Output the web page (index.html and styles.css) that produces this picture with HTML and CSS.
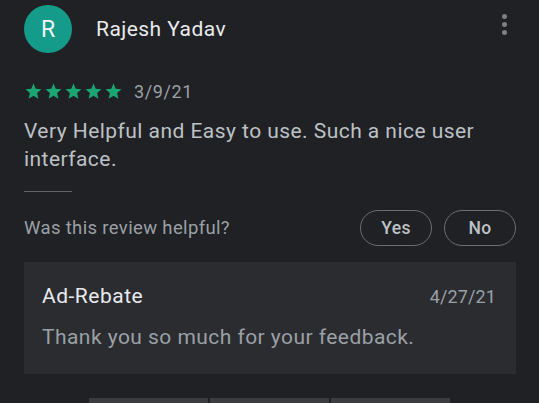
FILE: index.html
```html
<!DOCTYPE html>
<html>
<head>
<meta charset="utf-8">
<link rel="stylesheet" href="styles.css">
</head>
<body>
<div class="review">
  <div class="header">
    <div class="avatar">R</div>
    <div class="name">Rajesh Yadav</div>
    <div class="menu"><span></span><span></span><span></span></div>
  </div>
  <div class="meta">
    <div class="stars">
      <svg viewBox="0 0 24 24"><path d="M12 17.27L18.18 21l-1.64-7.03L22 9.24l-7.19-.61L12 2 9.19 8.63 2 9.24l5.46 4.73L5.82 21z"/></svg>
      <svg viewBox="0 0 24 24"><path d="M12 17.27L18.18 21l-1.64-7.03L22 9.24l-7.19-.61L12 2 9.19 8.63 2 9.24l5.46 4.73L5.82 21z"/></svg>
      <svg viewBox="0 0 24 24"><path d="M12 17.27L18.18 21l-1.64-7.03L22 9.24l-7.19-.61L12 2 9.19 8.63 2 9.24l5.46 4.73L5.82 21z"/></svg>
      <svg viewBox="0 0 24 24"><path d="M12 17.27L18.18 21l-1.64-7.03L22 9.24l-7.19-.61L12 2 9.19 8.63 2 9.24l5.46 4.73L5.82 21z"/></svg>
      <svg viewBox="0 0 24 24"><path d="M12 17.27L18.18 21l-1.64-7.03L22 9.24l-7.19-.61L12 2 9.19 8.63 2 9.24l5.46 4.73L5.82 21z"/></svg>
    </div>
    <span class="date">3/9/21</span>
  </div>
  <p class="text">Very Helpful and Easy to use. Such a nice user interface.</p>
  <div class="divider"></div>
  <div class="helpful">
    <span class="question">Was this review helpful?</span>
    <div class="buttons">
      <button class="pill">Yes</button>
      <button class="pill">No</button>
    </div>
  </div>
  <div class="reply">
    <div class="reply-head">
      <span class="dev">Ad-Rebate</span>
      <span class="reply-date">4/27/21</span>
    </div>
    <p class="reply-text">Thank you so much for your feedback.</p>
  </div>
  <div class="tabs">
    <div class="tab"></div>
    <div class="tab"></div>
    <div class="tab"></div>
  </div>
</div>
</body>
</html>
```
FILE: styles.css
```css
html, body {
  margin: 0;
  padding: 0;
  background: #202124;
  height: 100%;
  overflow: hidden;
}
body {
  font-family: Roboto, "Noto Sans", sans-serif;
  color: #bdc1c6;
}
.review {
  padding: 5px 23px 0 24px;
}
.header {
  display: flex;
  align-items: center;
  height: 48px;
}
.avatar {
  width: 48px;
  height: 48px;
  border-radius: 50%;
  background: #149b89;
  color: #f1f3f4;
  font-size: 23px;
  display: flex;
  align-items: center;
  justify-content: center;
}
.name {
  margin-left: 24px;
  font-size: 21px;
  color: #e8eaed;
  letter-spacing: 0.45px;
  flex: 1;
}
.menu {
  display: flex;
  flex-direction: column;
  gap: 3px;
  margin-right: 9px;
  margin-top: -10px;
}
.menu span {
  width: 5px;
  height: 5px;
  border-radius: 50%;
  background: #7c7f84;
}
.meta {
  display: flex;
  align-items: center;
  margin-top: 28px;
  height: 20px;
}
.stars {
  display: flex;
  gap: 1px;
}
.stars svg {
  width: 19px;
  height: 19px;
  fill: #1aa673;
}
.date {
  margin-left: 11px;
  font-size: 18px;
  color: #9aa0a6;
  letter-spacing: 0.6px;
}
.text {
  margin: 16px 0 0;
  font-size: 21px;
  line-height: 28px;
  color: #bdc1c6;
  letter-spacing: 0.45px;
  max-width: 470px;
}
.divider {
  width: 48px;
  height: 1px;
  background: #5f6368;
  margin-top: 18px;
}
.helpful {
  display: flex;
  align-items: center;
  justify-content: space-between;
  margin-top: 18px;
}
.question {
  font-size: 18.5px;
  color: #9aa0a6;
  letter-spacing: 0.35px;
}
.buttons {
  display: flex;
  gap: 12px;
}
.pill {
  width: 72px;
  height: 36px;
  border: 1px solid #6a6d72;
  border-radius: 18px;
  background: transparent;
  color: #bdc1c6;
  font-family: Roboto, "Noto Sans", sans-serif;
  font-weight: 500;
  font-size: 17.5px;
  letter-spacing: 0.3px;
  padding: 0;
}
.reply {
  margin-top: 16px;
  background: #2b2c30;
  padding: 22px 20px 25px 18px;
}
.reply-head {
  display: flex;
  justify-content: space-between;
  align-items: baseline;
  line-height: 24px;
}
.dev {
  font-size: 21px;
  color: #e8eaed;
  letter-spacing: 0.5px;
}
.reply-date {
  font-size: 18px;
  color: #9aa0a6;
  letter-spacing: 0.1px;
}
.reply-text {
  margin: 16px 0 0;
  font-size: 21px;
  line-height: 24px;
  color: #9aa0a6;
  letter-spacing: 0.45px;
}
.tabs {
  display: flex;
  gap: 2px;
  margin: 24px 0 0 65px;
  width: 361px;
}
.tab {
  flex: 1;
  height: 10px;
  background: #3b3c3f;
}
```
